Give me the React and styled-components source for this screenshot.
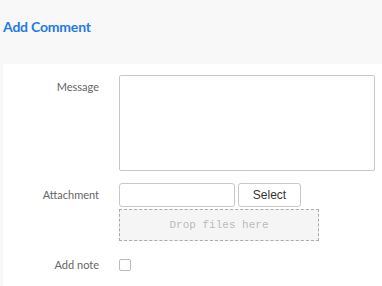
import React from 'react'
import styled, {createGlobalStyle} from 'styled-components'

const Global = createGlobalStyle`
    html, body {
        margin: 0;
        padding: 0;
        background: #f8f8f8;
        font-family: "Lato", "Noto Sans", sans-serif;
    }
`

const Page = styled.div`
    padding: 17px 0 0 3px;
`

const Title = styled.h2`
    margin: 0 0 27px 0;
    font-size: 14px;
    font-weight: 700;
    color: #1f7ae8;
    line-height: 20px;
    letter-spacing: -0.2px;
`

const Panel = styled.div`
    background: #fff;
    border-radius: 3px 0 0 0;
    padding: 11px 0 20px 0;
    display: flex;
    flex-direction: column;
    gap: 12px;
`

const Row = styled.div`
    display: grid;
    grid-template-columns: 96px 1fr;
    column-gap: 20px;
    align-items: ${p => p.$center ? 'center' : 'start'};
    margin-top: ${p => p.$space || 0}px;
`

const Label = styled.label`
    text-align: right;
    font-size: 11px;
    color: #666;
    padding-top: ${p => p.$top || 0}px;
`

const TextArea = styled.textarea`
    width: 256px;
    height: 96px;
    box-sizing: border-box;
    border: 1px solid #c8c8c8;
    border-radius: 2px;
    resize: none;
    margin: 0;
    display: block;
`

const Stack = styled.div`
    display: flex;
    flex-direction: column;
    gap: 2px;
`

const InputRow = styled.div`
    display: flex;
    gap: 3px;
`

const TextInput = styled.input`
    width: 116px;
    height: 24px;
    box-sizing: border-box;
    border: 1px solid #c8c8c8;
    border-radius: 3px;
    margin: 0;
`

const Button = styled.button`
    width: 63px;
    height: 24px;
    box-sizing: border-box;
    border: 1px solid #c8c8c8;
    border-radius: 3px;
    background: #fff;
    font-family: "Liberation Sans", sans-serif;
    font-size: 12px;
    font-weight: 400;
    color: #333;
    margin: 0;
    padding: 0;
`

const DropZone = styled.div`
    width: 200px;
    height: 32px;
    box-sizing: border-box;
    border: 1px dashed #aaa;
    background: #f5f5f5;
    display: flex;
    align-items: center;
    justify-content: center;
    font-family: "Liberation Mono", monospace;
    font-size: 11px;
    color: #bbb;
`

const Check = styled.span`
    display: block;
    width: 10px;
    height: 10px;
    border: 1px solid #bbb;
    border-radius: 2px;
    background: #fff;
`

export default function App() {
    return (
        <>
            <Global />
            <Page>
                <Title>Add Comment</Title>
                <Panel>
                    <Row>
                        <Label $top={5}>Message</Label>
                        <TextArea />
                    </Row>
                    <Row>
                        <Label $top={5}>Attachment</Label>
                        <Stack>
                            <InputRow>
                                <TextInput type="text" />
                                <Button>Select</Button>
                            </InputRow>
                            <DropZone>Drop files here</DropZone>
                        </Stack>
                    </Row>
                    <Row $center $space={5}>
                        <Label>Add note</Label>
                        <Check />
                    </Row>
                </Panel>
            </Page>
        </>
    )
}
